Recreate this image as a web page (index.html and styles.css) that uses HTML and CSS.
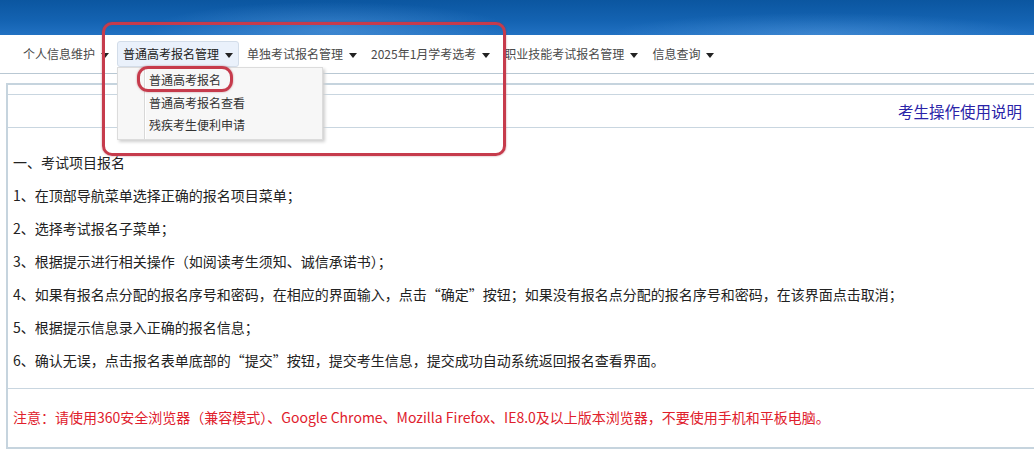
FILE: index.html
```html
<!DOCTYPE html>
<html lang="zh-CN">
<head>
	<meta charset="utf-8">
	<link rel="stylesheet" href="styles.css">
</head>
<body>
	<div class="banner"></div>
	<div class="nav">
		<span class="navitem">个人信息维护<i class="caret"></i></span>
		<span class="navitem active">普通高考报名管理<i class="caret"></i>
			<div class="menu">
				<div class="menuline"></div>
				<div class="menuitem">普通高考报名</div>
				<div class="menuitem">普通高考报名查看</div>
				<div class="menuitem">残疾考生便利申请</div>
			</div>
		</span>
		<span class="navitem">单独考试报名管理<i class="caret"></i></span>
		<span class="navitem">2025年1月学考选考<i class="caret"></i></span>
		<span class="navitem">职业技能考试报名管理<i class="caret"></i></span>
		<span class="navitem">信息查询<i class="caret"></i></span>
	</div>
	<div class="box">
		<div class="boxtop"></div>
		<div class="titlerow">考生操作使用说明</div>
		<div class="steps">
			<p>一、考试项目报名</p>
			<p>1、在顶部导航菜单选择正确的报名项目菜单；</p>
			<p>2、选择考试报名子菜单；</p>
			<p>3、根据提示进行相关操作（如阅读考生须知、诚信承诺书）；</p>
			<p>4、如果有报名点分配的报名序号和密码，在相应的界面输入，点击“确定”按钮；如果没有报名点分配的报名序号和密码，在该界面点击取消；</p>
			<p>5、根据提示信息录入正确的报名信息；</p>
			<p>6、确认无误，点击报名表单底部的“提交”按钮，提交考生信息，提交成功自动系统返回报名查看界面。</p>
		</div>
		<div class="notice">注意：请使用360安全浏览器（兼容模式）、Google Chrome、Mozilla Firefox、IE8.0及以上版本浏览器，不要使用手机和平板电脑。</div>
	</div>
	<div class="mark big"></div>
	<div class="mark small"></div>
</body>
</html>
```

FILE: styles.css
```css
body {margin:0;font-family:"Noto Sans CJK SC","Noto Sans",sans-serif;background:#fff;color:#222;position:relative;overflow:hidden;height:463px;}
.banner {
	height:35px;
	background:
		radial-gradient(ellipse 260px 40px at 330px 30px, rgba(120,180,240,0.35), rgba(120,180,240,0) 70%),
		radial-gradient(ellipse 300px 30px at 820px 34px, rgba(120,180,240,0.3), rgba(120,180,240,0) 70%),
		linear-gradient(180deg,#0b56a0 0%,#1463b2 60%,#2171c2 100%);
}
.nav {height:38px;border-bottom:1px solid #b9c8d3;display:flex;align-items:center;padding-left:17px;font-size:12px;color:#4a4a4a;}
.navitem {position:relative;height:24px;line-height:24px;padding:0 5px;margin-right:2px;border:1px solid transparent;border-radius:3px;white-space:nowrap;}
.navitem.active {background:#eaf1fb;border-color:#d3dde9;color:#222;}
.caret {display:inline-block;width:0;height:0;border-left:4px solid transparent;border-right:4px solid transparent;border-top:5px solid #222;margin-left:6px;vertical-align:middle;}
.menu {position:absolute;left:-1px;top:25px;width:204px;height:70px;background:#f7f7f7;border:1px solid #dcdcdc;box-shadow:2px 2px 3px #cfcfcf;padding-top:1px;z-index:2;}
.menuline {position:absolute;left:26px;top:0;bottom:0;border-left:1px solid #d8d8d8;border-right:1px solid #fff;}
.menuitem {height:22.5px;line-height:22.5px;padding-left:31px;color:#333;font-size:12px;}
.box {margin:9px 0 0 6px;border:2px solid #c6d4de;border-right:none;height:362px;}
.boxtop {height:9px;border-bottom:1px solid #c9d6e0;}
.titlerow {height:32px;line-height:32px;border-bottom:1px solid #c9d6e0;text-align:right;padding-right:12px;font-size:15.5px;color:#2a23a8;}
.steps {padding:18px 0 11px 5px;border-bottom:1px solid #c9d6e0;font-size:14px;}
.steps p {margin:0;line-height:33px;}
.notice {padding:14px 0 0 5px;font-size:14px;color:#e0202c;line-height:28px;}
.mark {position:absolute;border:3px solid #c63b4c;border-radius:10px;box-shadow:0 0 2px rgba(150,30,40,0.5);z-index:3;}
.mark.big {left:102px;top:22px;width:398px;height:128px;}
.mark.small {left:137px;top:66px;width:90px;height:20px;border-radius:11px;}
```
